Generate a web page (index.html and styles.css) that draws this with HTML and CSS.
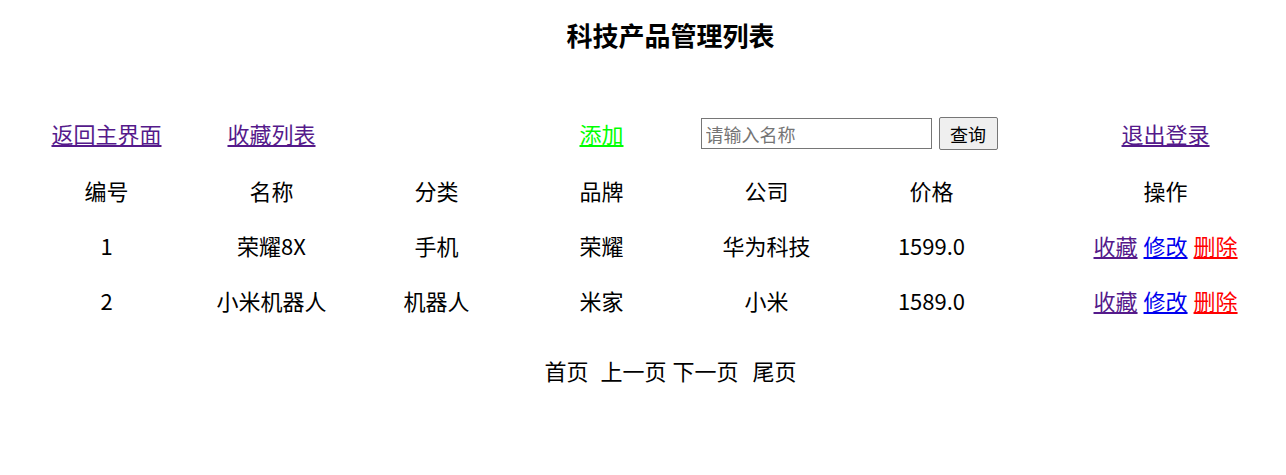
FILE: index.html
```html
<!DOCTYPE html>
<html lang="zh-CN">
<head>
<meta charset="utf-8">
<title>科技产品管理列表</title>
<link rel="stylesheet" href="styles.css">
</head>
<body>
<table class="list">
  <colgroup>
    <col class="c"><col class="c"><col class="c"><col class="c"><col class="c"><col class="c"><col class="c-last">
  </colgroup>
  <tr class="title-row">
    <th colspan="7" class="title">科技产品管理列表</th>
  </tr>
  <tr class="nav-row">
    <td><a href="#" class="visited">返回主界面</a></td>
    <td><a href="#" class="visited">收藏列表</a></td>
    <td></td>
    <td><a href="#" class="add">添加</a></td>
    <td colspan="2">
      <form class="search">
        <input type="text" class="search-input" placeholder="请输入名称">
        <button type="button" class="search-btn">查询</button>
      </form>
    </td>
    <td><a href="#" class="visited">退出登录</a></td>
  </tr>
  <tr class="row">
    <td>编号</td><td>名称</td><td>分类</td><td>品牌</td><td>公司</td><td>价格</td><td>操作</td>
  </tr>
  <tr class="row">
    <td>1</td><td>荣耀8X</td><td>手机</td><td>荣耀</td><td>华为科技</td><td>1599.0</td>
    <td><span class="ops"><a href="#" class="visited">收藏</a><a href="#" class="edit">修改</a><a href="#" class="del">删除</a></span></td>
  </tr>
  <tr class="row">
    <td>2</td><td>小米机器人</td><td>机器人</td><td>米家</td><td>小米</td><td>1589.0</td>
    <td><span class="ops"><a href="#" class="visited">收藏</a><a href="#" class="edit">修改</a><a href="#" class="del">删除</a></span></td>
  </tr>
  <tr class="page-row">
    <td colspan="7">
      <span class="pager"><span class="p p-first">首页</span><span class="p p-prev">上一页</span><span class="p p-next">下一页</span><span class="p">尾页</span></span>
    </td>
  </tr>
</table>
</body>
</html>
```

FILE: styles.css
```css
html, body {
  margin: 0;
  padding: 0;
  overflow-x: hidden;
  background: #fff;
}
body {
  font-family: "Noto Sans CJK SC", "Microsoft YaHei", sans-serif;
  font-size: 22px;
  color: #000;
}
.list {
  table-layout: fixed;
  width: 1293px;
  margin-left: 24px;
  border-collapse: collapse;
  border-spacing: 0;
}
.list col.c { width: 165px; }
.list col.c-last { width: 303px; }
.list td, .list th {
  padding: 0;
  text-align: center;
  vertical-align: middle;
  line-height: 30px;
  white-space: nowrap;
}
.title-row th {
  height: 70px;
  font-size: 26px;
  font-weight: bold;
}
.nav-row td {
  height: 59px;
  padding-top: 33px;
}
.row td {
  height: 55px;
}
.page-row td {
  height: 55px;
  padding-top: 15px;
  padding-bottom: 30px;
}
a { text-decoration: underline; }
a.visited { color: #551a8b; }
a.add { color: #00ff00; }
a.edit { color: #0000ee; }
a.del { color: #ff0000; }
.search {
  display: inline-flex;
  align-items: center;
  gap: 7px;
  margin: 0;
  vertical-align: middle;
}
.search-input {
  box-sizing: border-box;
  width: 231px;
  height: 31px;
  border: 1px solid #767676;
  border-radius: 0;
  padding: 0 4px;
  font-family: "Noto Sans CJK SC", "Microsoft YaHei", sans-serif;
  font-size: 18px;
  color: #000;
  background: #fff;
}
.search-input::placeholder { color: #757575; }
.search-btn {
  box-sizing: border-box;
  width: 59px;
  height: 33px;
  border: 1px solid #767676;
  border-radius: 2px;
  background: #efefef;
  padding: 0;
  font-family: "Noto Sans CJK SC", "Microsoft YaHei", sans-serif;
  font-size: 18px;
  color: #000;
}
.ops {
  display: inline-flex;
  gap: 6px;
}
.pager {
  display: inline-flex;
}
.p-first { margin-right: 12px; }
.p-prev { margin-right: 6px; }
.p-next { margin-right: 14px; }
```
